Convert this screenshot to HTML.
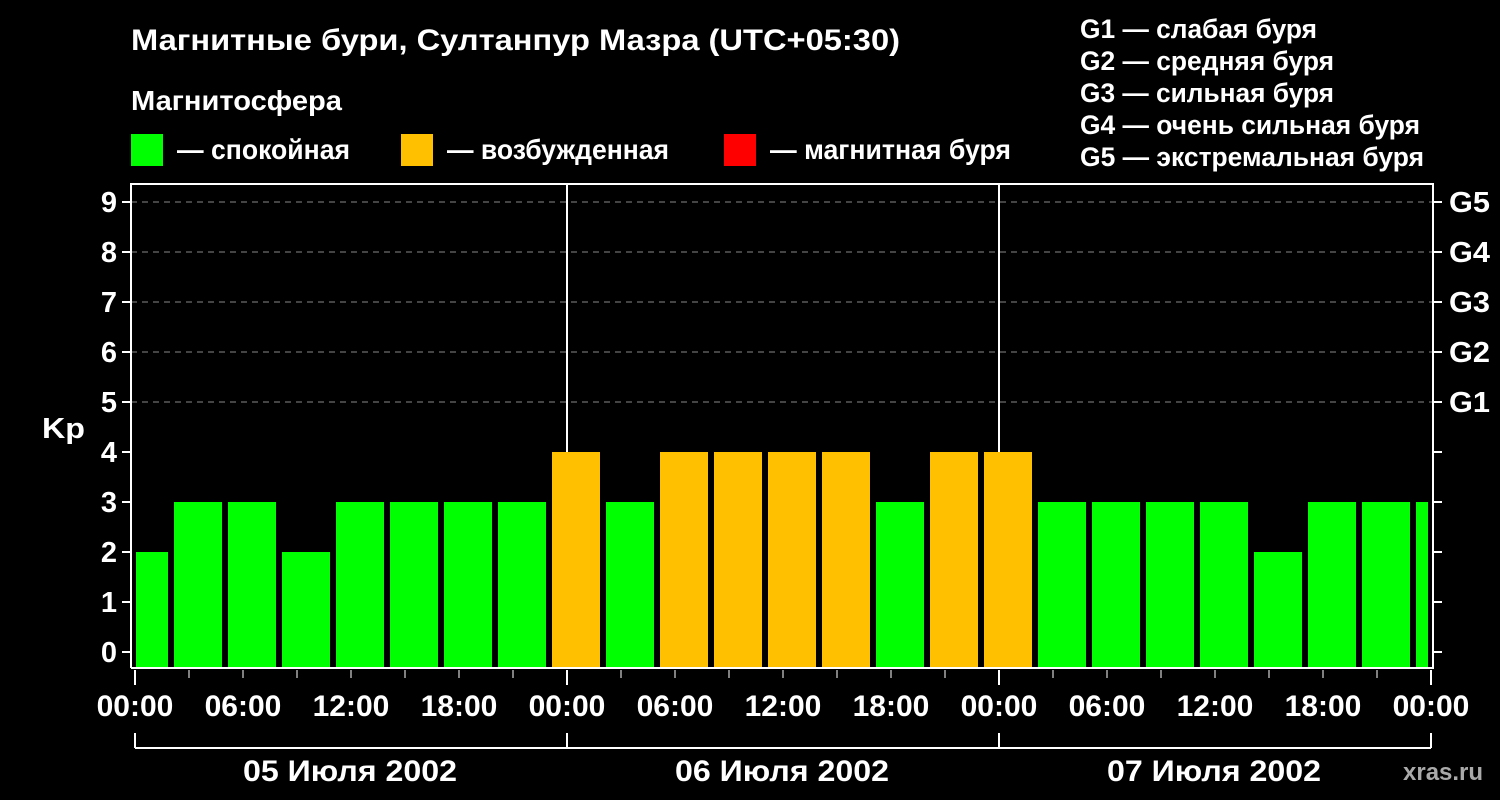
<!DOCTYPE html><html><head><style>body{margin:0;background:#000}svg{display:block}text{font-family:"Liberation Sans",sans-serif;font-weight:bold;fill:#fff}</style></head><body>
<svg width="1500" height="800" xmlns="http://www.w3.org/2000/svg">
<rect width="1500" height="800" fill="#000"/>
<text x="131" y="50" font-size="30" textLength="769" lengthAdjust="spacingAndGlyphs">Магнитные бури, Султанпур Мазра (UTC+05:30)</text>
<text x="131" y="110" font-size="28" textLength="211" lengthAdjust="spacingAndGlyphs">Магнитосфера</text>
<rect x="131" y="134" width="32" height="32" fill="#00ff00"/><text x="177" y="159" font-size="28" textLength="173" lengthAdjust="spacingAndGlyphs">— спокойная</text>
<rect x="401" y="134" width="32" height="32" fill="#ffc000"/><text x="447" y="159" font-size="28" textLength="222" lengthAdjust="spacingAndGlyphs">— возбужденная</text>
<rect x="724" y="134" width="32" height="32" fill="#ff0000"/><text x="770" y="159" font-size="28" textLength="241" lengthAdjust="spacingAndGlyphs">— магнитная буря</text>
<g font-size="27"><text x="1080" y="38" textLength="237" lengthAdjust="spacingAndGlyphs">G1 — слабая буря</text><text x="1080" y="70" textLength="254" lengthAdjust="spacingAndGlyphs">G2 — средняя буря</text><text x="1080" y="102" textLength="254" lengthAdjust="spacingAndGlyphs">G3 — сильная буря</text><text x="1080" y="134" textLength="340" lengthAdjust="spacingAndGlyphs">G4 — очень сильная буря</text><text x="1080" y="166" textLength="344" lengthAdjust="spacingAndGlyphs">G5 — экстремальная буря</text></g>
<g stroke="#888" stroke-dasharray="6,5" stroke-width="1"><line x1="131" y1="202" x2="1433" y2="202"/><line x1="131" y1="252" x2="1433" y2="252"/><line x1="131" y1="302" x2="1433" y2="302"/><line x1="131" y1="352" x2="1433" y2="352"/><line x1="131" y1="402" x2="1433" y2="402"/></g>
<g fill="#00ff00">
<rect x="136" y="552" width="32" height="116"/>
<rect x="174" y="502" width="48" height="166"/><rect x="228" y="502" width="48" height="166"/><rect x="282" y="552" width="48" height="116"/><rect x="336" y="502" width="48" height="166"/><rect x="390" y="502" width="48" height="166"/><rect x="444" y="502" width="48" height="166"/><rect x="498" y="502" width="48" height="166"/><rect x="606" y="502" width="48" height="166"/><rect x="876" y="502" width="48" height="166"/><rect x="1038" y="502" width="48" height="166"/><rect x="1092" y="502" width="48" height="166"/><rect x="1146" y="502" width="48" height="166"/><rect x="1200" y="502" width="48" height="166"/><rect x="1254" y="552" width="48" height="116"/><rect x="1308" y="502" width="48" height="166"/><rect x="1362" y="502" width="48" height="166"/><rect x="1416" y="502" width="12" height="166"/></g>
<g fill="#ffc000"><rect x="552" y="452" width="48" height="216"/><rect x="660" y="452" width="48" height="216"/><rect x="714" y="452" width="48" height="216"/><rect x="768" y="452" width="48" height="216"/><rect x="822" y="452" width="48" height="216"/><rect x="930" y="452" width="48" height="216"/><rect x="984" y="452" width="48" height="216"/></g>
<g stroke="#fff" stroke-width="2" fill="none">
<polyline points="131,668 131,184 1433,184 1433,668 131,668"/>
<line x1="567" y1="184" x2="567" y2="452"/><line x1="999" y1="184" x2="999" y2="452"/>
<path d="M122 202h9M122 252h9M122 302h9M122 352h9M122 402h9M122 452h9M122 502h9M122 552h9M122 602h9M122 652h9M1433 202h9M1433 252h9M1433 302h9M1433 352h9M1433 402h9M1433 452h9M1433 502h9M1433 552h9M1433 602h9M1433 652h9"/>
<path d="M135 670v15M567 670v15M999 670v15M1431 670v15M135 733v15M567 733v15M999 733v15M1431 733v15M135 748H1431"/>
<path d="M189 670v8M243 670v8M297 670v8M351 670v8M405 670v8M459 670v8M513 670v8M621 670v8M675 670v8M729 670v8M783 670v8M837 670v8M891 670v8M945 670v8M1053 670v8M1107 670v8M1161 670v8M1215 670v8M1269 670v8M1323 670v8M1377 670v8" stroke-width="1"/>
</g>
<g font-size="29" text-anchor="end"><text x="117" y="212">9</text><text x="117" y="262">8</text><text x="117" y="312">7</text><text x="117" y="362">6</text><text x="117" y="412">5</text><text x="117" y="462">4</text><text x="117" y="512">3</text><text x="117" y="562">2</text><text x="117" y="612">1</text><text x="117" y="662">0</text></g>
<text x="42" y="438" font-size="29" textLength="43" lengthAdjust="spacingAndGlyphs">Kp</text>
<g font-size="29"><text x="1449" y="212" textLength="41" lengthAdjust="spacingAndGlyphs">G5</text><text x="1449" y="262" textLength="41" lengthAdjust="spacingAndGlyphs">G4</text><text x="1449" y="312" textLength="41" lengthAdjust="spacingAndGlyphs">G3</text><text x="1449" y="362" textLength="41" lengthAdjust="spacingAndGlyphs">G2</text><text x="1449" y="412" textLength="41" lengthAdjust="spacingAndGlyphs">G1</text></g>
<g font-size="30" text-anchor="middle"><text x="135" y="716">00:00</text><text x="243" y="716">06:00</text><text x="351" y="716">12:00</text><text x="459" y="716">18:00</text><text x="567" y="716">00:00</text><text x="675" y="716">06:00</text><text x="783" y="716">12:00</text><text x="891" y="716">18:00</text><text x="999" y="716">00:00</text><text x="1107" y="716">06:00</text><text x="1215" y="716">12:00</text><text x="1323" y="716">18:00</text><text x="1431" y="716">00:00</text></g>
<g font-size="30"><text x="243" y="781" textLength="214" lengthAdjust="spacingAndGlyphs">05 Июля 2002</text><text x="675" y="781" textLength="214" lengthAdjust="spacingAndGlyphs">06 Июля 2002</text><text x="1107" y="781" textLength="214" lengthAdjust="spacingAndGlyphs">07 Июля 2002</text></g>
<text x="1403" y="780" font-size="24" style="fill:#aaa">xras.ru</text>
</svg></body></html>
